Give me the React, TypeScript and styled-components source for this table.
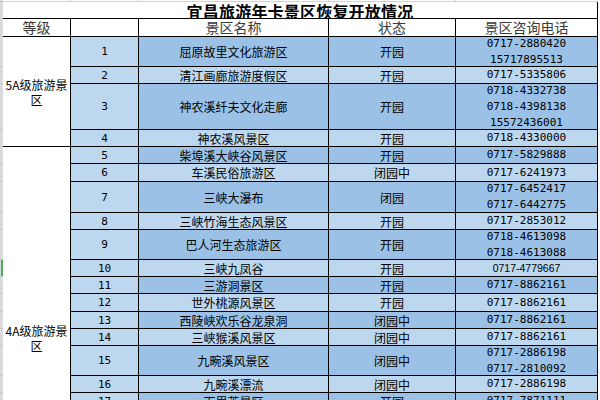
import React from "react";
import styled, { createGlobalStyle } from "styled-components";

const GlobalStyle = createGlobalStyle`
  html, body {
    margin: 0;
    padding: 0;
    background: #ffffff;
  }
`;

type Spot = {
  name: string;
  status: string;
  phones: string[];
  height: number;
  smallPhone?: boolean;
};

type Group = {
  label: string;
  // rows the merged cell reaches past the last listed spot (cut off below the window)
  extra: number;
  spots: Spot[];
};

const groups: Group[] = [
  {
    label: "5A级旅游景区",
    extra: 0,
    spots: [
      { name: "屈原故里文化旅游区", status: "开园", phones: ["0717-2880420", "15717895513"], height: 30 },
      { name: "清江画廊旅游度假区", status: "开园", phones: ["0717-5335806"], height: 17 },
      {
        name: "神农溪纤夫文化走廊",
        status: "开园",
        phones: ["0718-4332738", "0718-4398138", "15572436001"],
        height: 46,
      },
      { name: "神农溪风景区", status: "开园", phones: ["0718-4330000"], height: 17 },
    ],
  },
  {
    label: "4A级旅游景区",
    extra: 7,
    spots: [
      { name: "柴埠溪大峡谷风景区", status: "开园", phones: ["0717-5829888"], height: 17 },
      { name: "车溪民俗旅游区", status: "闭园中", phones: ["0717-6241973"], height: 18 },
      { name: "三峡大瀑布", status: "闭园", phones: ["0717-6452417", "0717-6442775"], height: 31 },
      { name: "三峡竹海生态风景区", status: "开园", phones: ["0717-2853012"], height: 17 },
      { name: "巴人河生态旅游区", status: "开园", phones: ["0718-4613098", "0718-4613088"], height: 30 },
      { name: "三峡九凤谷", status: "开园", phones: ["0717-4779667"], height: 17, smallPhone: true },
      { name: "三游洞景区", status: "开园", phones: ["0717-8862161"], height: 17 },
      { name: "世外桃源风景区", status: "开园", phones: ["0717-8862161"], height: 18 },
      { name: "西陵峡欢乐谷龙泉洞", status: "闭园中", phones: ["0717-8862161"], height: 17 },
      { name: "三峡猴溪风景区", status: "闭园中", phones: ["0717-8862161"], height: 17 },
      { name: "九畹溪风景区", status: "闭园中", phones: ["0717-2886198", "0717-2810092"], height: 30 },
      { name: "九畹溪漂流", status: "闭园中", phones: ["0717-2886198"], height: 17 },
      { name: "百里荒景区", status: "开园", phones: ["0717-7871111"], height: 17 },
    ],
  },
];

const SELECTED_ROW = 10;

const CJK = `"Noto Sans CJK SC", sans-serif`;
const MONO = `"DejaVu Sans Mono", "Noto Sans CJK SC", monospace`;

const LIGHT = "#bdd7ee";
const DARK = "#9bc2e6";

const Sheet = styled.div<{ $rows: string }>`
  display: grid;
  grid-template-columns: 3px 68px 68px 190px 127px 142px 1fr;
  grid-template-rows: ${(p) => p.$rows};
  grid-auto-rows: 17px;
  width: 600px;
  height: 400px;
  overflow: hidden;
  background: #ffffff;
  font-family: ${CJK};
  color: #000000;
`;

const Place = styled.div<{ $row: number; $col: number | string; $span?: number }>`
  grid-row: ${(p) => p.$row} / span ${(p) => p.$span ?? 1};
  grid-column: ${(p) => p.$col};
  box-sizing: border-box;
  min-width: 0;
  min-height: 0;
`;

const Gutter = styled(Place)<{ $active?: boolean }>`
  background: ${(p) => (p.$active ? "#4caf50" : "#dcdcdc")};
  border-left: 1px solid #d8d8d8;
  border-bottom: 1px solid #c4c4c4;
`;

const GridLine = styled(Place)`
  border-right: 1px solid #d4d4d4;
  border-bottom: 1px solid #d4d4d4;
`;

const Cell = styled(Place)<{ $bg?: string }>`
  display: flex;
  align-items: center;
  justify-content: center;
  text-align: center;
  background: ${(p) => p.$bg ?? "#ffffff"};
  border-right: 1px solid #000000;
  border-bottom: 1px solid #000000;
  font-size: 12px;
  line-height: 15px;
  white-space: nowrap;
`;

const TitleCell = styled(Cell)`
  font-size: 16px;
  font-weight: 700;
  line-height: 16px;
  padding-top: 1px;
  letter-spacing: 0.2px;
`;

const HeadCell = styled(Cell)`
  font-size: 14px;
  line-height: 15px;
  color: #3a3a3a;
`;

const RankCell = styled(Cell)`
  white-space: normal;
  padding: 0 2px;
  line-height: 15px;
`;

const NumCell = styled(Cell)`
  font-family: ${MONO};
  font-size: 11px;
`;

const PhoneList = styled.div<{ $small?: boolean }>`
  display: flex;
  flex-direction: column;
  align-items: center;
  font-family: ${(p) => (p.$small ? `"Liberation Sans", sans-serif` : MONO)};
  font-size: ${(p) => (p.$small ? "10.5px" : "11px")};
  line-height: 16px;
`;

export default function App() {
  const heights = groups.flatMap((g) => g.spots.map((s) => s.height));
  const rows = ["2px", "17px", "18px", ...heights.map((h) => `${h}px`)].join(" ");

  const cells: React.ReactNode[] = [];
  let gridRow = 4;
  let index = 1;

  groups.forEach((group) => {
    cells.push(
      <RankCell key={`rank-${group.label}`} $row={gridRow} $col={2} $span={group.spots.length + group.extra}>
        {group.label}
      </RankCell>
    );
    group.spots.forEach((spot) => {
      const bg = index % 2 === 1 ? DARK : LIGHT;
      cells.push(
        <Gutter key={`g-${index}`} $row={gridRow} $col={1} $active={index === SELECTED_ROW} />,
        <NumCell key={`n-${index}`} $row={gridRow} $col={3} $bg={LIGHT}>
          {index}
        </NumCell>,
        <Cell key={`s-${index}`} $row={gridRow} $col={4} $bg={bg}>
          {spot.name}
        </Cell>,
        <Cell key={`st-${index}`} $row={gridRow} $col={5} $bg={bg}>
          {spot.status}
        </Cell>,
        <Cell key={`p-${index}`} $row={gridRow} $col={6} $bg={bg}>
          <PhoneList $small={spot.smallPhone}>
            {spot.phones.map((p) => (
              <span key={p}>{p}</span>
            ))}
          </PhoneList>
        </Cell>
      );
      gridRow += 1;
      index += 1;
    });
  });

  return (
    <>
      <GlobalStyle />
      <Sheet $rows={rows}>
        <Gutter $row={1} $col={1} />
        {[2, 3, 4, 5, 6].map((c) => (
          <GridLine key={`top-${c}`} $row={1} $col={c} />
        ))}

        <Gutter $row={2} $col={1} />
        <TitleCell $row={2} $col="2 / 7">
          宜昌旅游年卡景区恢复开放情况
        </TitleCell>

        <Gutter $row={3} $col={1} />
        <HeadCell $row={3} $col={2}>等级</HeadCell>
        <HeadCell $row={3} $col={3} />
        <HeadCell $row={3} $col={4}>景区名称</HeadCell>
        <HeadCell $row={3} $col={5}>状态</HeadCell>
        <HeadCell $row={3} $col={6}>景区咨询电话</HeadCell>

        {cells}
      </Sheet>
    </>
  );
}
